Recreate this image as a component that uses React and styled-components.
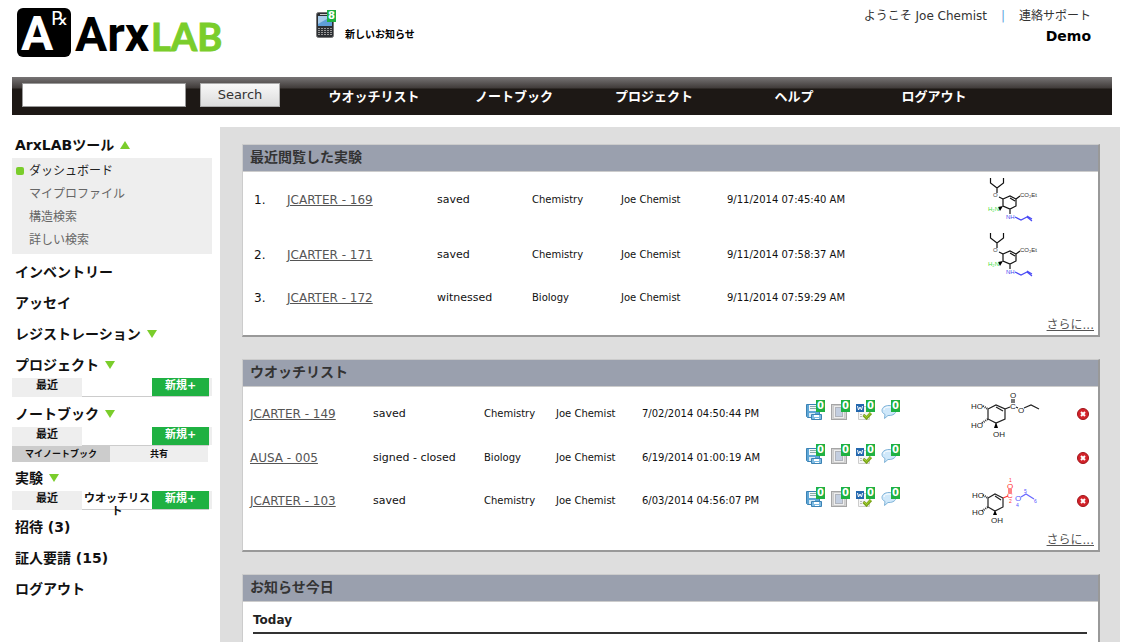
import React from "react";
import styled, { createGlobalStyle } from "styled-components";

const GREEN = "#1fb142";
const LIME = "#7acd2b";

const GlobalStyle = createGlobalStyle`
  *, *::before, *::after { box-sizing: border-box; }
  body {
    margin: 0;
    background: #fff;
    color: #111;
    font-family: "DejaVu Sans", "Noto Sans CJK JP", sans-serif;
    font-size: 12px;
    line-height: 16px;
  }
  ul { list-style: none; margin: 0; padding: 0; }
  a { color: inherit; text-decoration: none; }
  button, input { font-family: inherit; }
`;

const Page = styled.div`
  display: flex;
  flex-direction: column;
  min-height: 100vh;
  padding-right: 15px;
`;

/* ---------- top ---------- */

const Header = styled.header`
  display: flex;
  align-items: flex-start;
  height: 77px;
  padding: 0 29px 0 17px;
`;

const LogoLink = styled.a`
  display: block;
  width: 299px;
  svg { display: block; }
`;

const Notice = styled.a`
  display: flex;
  align-items: flex-end;
  gap: 9px;
  padding-top: 10px;
  font-size: 10px;
  font-weight: bold;
  color: #000;
`;

const IconWithCount = styled.span`
  position: relative;
  display: block;
  width: ${(p) => p.$width}px;
  height: ${(p) => p.$height}px;
  padding-top: ${(p) => p.$drop}px;
  svg { display: block; }
`;

const Count = styled.span`
  position: absolute;
  top: 0;
  right: 0;
  padding: 0 1px;
  background: ${GREEN};
  color: #fff;
  font-size: 10px;
  font-weight: bold;
  line-height: 12px;
`;

const Account = styled.div`
  margin-left: auto;
  padding-top: 7px;
  text-align: right;
  color: #333;
`;

const AccountLine = styled.div`
  display: flex;
  justify-content: flex-end;
  line-height: 18px;
`;

const Divider = styled.span`
  padding: 0 14px;
  color: #5aa5dc;
`;

const Group = styled.strong`
  display: block;
  font-size: 14px;
  line-height: 22px;
  color: #000;
`;

const NavBar = styled.div`
  display: flex;
  align-items: center;
  height: 38px;
  margin: 0 8px 12px 12px;
  padding: 0 10px;
  background: linear-gradient(#777475 0, #403b39 11px, #1d1815 12px, #1d1815 100%);
`;

const SearchForm = styled.form`
  display: flex;
  gap: 14px;
  padding-bottom: 2px;
`;

const SearchInput = styled.input`
  width: 164px;
  height: 24px;
  border: 1px solid #999;
  background: #fff;
  padding: 0 4px;
`;

const SearchButton = styled.button`
  width: 80px;
  height: 24px;
  padding: 0;
  border: 1px solid #aaa;
  background: linear-gradient(#f8f8f8, #dcdcdc);
  color: #333;
  font-size: 13px;
  line-height: 20px;
`;

const NavList = styled.ul`
  display: flex;
  margin-left: 24px;
  padding-top: 2px;
`;

const NavItem = styled.li`
  width: 140px;
  text-align: center;
  font-size: 13px;
  font-weight: bold;
  color: #fff;
`;

/* ---------- sidebar ---------- */

const Columns = styled.div`
  display: flex;
  flex: 1;
`;

const Sidebar = styled.nav`
  width: 220px;
  padding: 5px 8px 0 12px;
`;

const SideList = styled.ul`
  display: flex;
  flex-direction: column;
  gap: 5px;
`;

const SideHeading = styled.a`
  display: flex;
  align-items: center;
  gap: 6px;
  height: 26px;
  padding-left: 3px;
  font-size: 14px;
  font-weight: bold;
`;

const Triangle = styled.span`
  border: 5px solid transparent;
  ${(p) =>
    p.$open
      ? `border-top-width: 0; border-bottom: 8px solid ${LIME};`
      : `border-bottom-width: 0; border-top: 8px solid ${LIME};`}
`;

const SubMenu = styled.ul`
  padding: 1px 0 3px;
  background: #eee;
`;

const SubItem = styled.li`
  display: flex;
  align-items: center;
  gap: 5px;
  height: 23px;
  padding-left: 4px;
  color: ${(p) => (p.$active ? "#222" : "#666")};
  &::before {
    content: "";
    width: 8px;
    height: 8px;
    border-radius: 2px;
    background: ${(p) => (p.$active ? LIME : "transparent")};
  }
`;

const Tabs = styled.div`
  display: flex;
  height: 18px;
  background: #eee;
`;

const Tab = styled.a`
  width: ${(p) => (p.$kind === "new" ? 57 : 70)}px;
  height: 19px;
  padding-top: 1px;
  text-align: center;
  font-size: 11px;
  font-weight: bold;
  line-height: 13px;
  background: ${(p) => ({ recent: "#eee", middle: "#fff", new: GREEN })[p.$kind]};
  color: ${(p) => (p.$kind === "new" ? "#fff" : "#111")};
  border-bottom: 1px solid ${(p) => (p.$kind === "recent" ? "#eee" : "#ccc")};
`;

const SubTabs = styled.div`
  display: flex;
  height: 16px;
  margin: 1px 0 -2px;
  padding-right: 4px;
`;

const SubTab = styled.a`
  flex: 1;
  background: ${(p) => (p.$active ? "#ccc" : "#eee")};
  text-align: center;
  font-size: 9px;
  font-weight: bold;
`;

/* ---------- panels ---------- */

const Main = styled.main`
  display: flex;
  flex: 1;
  flex-direction: column;
  gap: 22px;
  padding: 17px 20px 0 22px;
  background: #dedede;
`;

const Panel = styled.section`
  flex: ${(p) => (p.$fill ? "1" : "none")};
  border: solid;
  border-width: 1px 2px ${(p) => (p.$fill ? 0 : 2)}px 1px;
  border-color: #ccc #999 #999 #ccc;
  background: #fff;
`;

const PanelTitle = styled.h2`
  height: 27px;
  margin: 0;
  padding-left: 7px;
  border-bottom: 1px solid #ccc;
  background: #9aa0ae;
  color: #333;
  font-size: 14px;
  line-height: 25px;
`;

const Table = styled.table`
  width: 100%;
  table-layout: fixed;
  border-collapse: collapse;
  td { padding: 0; }
`;

const Col = styled.col`
  width: ${(p) => (p.$w ? `${p.$w}px` : "auto")};
`;

const Row = styled.tr`
  height: ${(p) => p.$h}px;
`;

const NumberCell = styled.td`
  && { padding-left: 11px; }
`;

const NameCell = styled.td`
  && { padding-left: ${(p) => (p.$inset ? 7 : 0)}px; }
  a { color: #555; text-decoration: underline; }
`;

const StatusCell = styled.td`
  font-size: 11px;
`;

const SmallCell = styled.td`
  font-size: 10px;
`;

const DrawingCell = styled.td`
  svg { display: block; }
`;

const Actions = styled.div`
  display: flex;
  gap: 6px;
  padding-bottom: 8px;
`;

const IconButton = styled.button`
  display: block;
  padding: 0;
  border: 0;
  background: none;
  text-align: left;
  svg { display: block; }
`;

const PanelFooter = styled.div`
  height: 22px;
  padding-right: 4px;
  text-align: right;
  line-height: 24px;
  color: #555;
  a { text-decoration: underline; }
`;

const DayTitle = styled.h3`
  margin: 9px 11px 0 10px;
  padding-bottom: 3px;
  border-bottom: 2px solid #333;
  color: #222;
  font-size: 12px;
  line-height: 18px;
`;

/* ---------- drawings ---------- */

const Logo = () => (
  <svg width="210" height="68" viewBox="0 0 210 68" role="img" aria-label="ArxLAB">
    <rect x="0" y="8" width="54" height="49" rx="6" fill="#000" />
    <g fontFamily="Roboto, sans-serif" fontWeight="bold" fontSize="48">
      <text x="4" y="50" fill="#fff">A</text>
      <text x="58" y="51" fill="#000">Arx</text>
    </g>
    <text x="134" y="51" fontSize="38" fontFamily="Lato, sans-serif" fontWeight="bold" fill={LIME} stroke={LIME} strokeWidth="1">LAB</text>
    <text x="34" y="25" fontSize="19" fontFamily="DejaVu Serif, DejaVu Sans, serif" fill="#fff">℞</text>
  </svg>
);

const Phone = () => (
  <svg width="18" height="26" viewBox="0 0 18 26">
    <rect x="0.5" y="0.5" width="17" height="25" rx="2" fill="#2c2f33" stroke="#777" />
    <rect x="4" y="2" width="8" height="1" fill="#ccc" />
    <rect x="2" y="4" width="14" height="10" fill="#5f9fd8" />
    <path d="M2 4h14L2 12z" fill="#a7cbea" />
    <path d="M2 16.500h14M2 18.500h14M2 20.500h14M2 22.500h14" stroke="#999" strokeDasharray="2 1" />
  </svg>
);

const Disk = () => (
  <svg width="16" height="16" viewBox="0 0 16 16">
    <path d="M.5.500h12l1 1v12h-12l-1-1z" fill="#5ea6d6" stroke="#3b82b4" />
    <path d="M3 1h9v6H3z" fill="#f4f8fb" />
    <path d="M4 2.500h6M4 4.500h7" stroke="#8aa" />
    <path d="M3 9h6v4H3z" fill="#d8eaf6" />
    <path d="M5.500 10.500h10v5h-10z" fill="#7fbbe2" stroke="#3b82b4" />
    <path d="M8 11h5v2H8zM9 14h4v1H9z" fill="#fff" />
  </svg>
);

const Frame = () => (
  <svg width="16" height="16" viewBox="0 0 16 16">
    <rect x=".5" y=".5" width="15" height="15" fill="#d4d4d4" stroke="#a5a5a5" />
    <rect x="2.500" y="1.500" width="11" height="13" fill="#eee" stroke="#ccc" />
    <rect x="4.500" y="3.500" width="7" height="9" fill="#c3cee0" stroke="#b0b4bc" />
  </svg>
);

const WordCheck = () => (
  <svg width="16" height="16" viewBox="0 0 16 16">
    <path d="M2.500 2.500h11v13h-11z" fill="#f6f6f6" stroke="#ccc" />
    <path d="M4 10.500h5M4 12.500h4" stroke="#bbb" strokeDasharray="2 1" />
    <rect x="0" y="0" width="8" height="8" fill="#2468ae" />
    <path d="M1.500 2l1 4L4 3l1.500 3 1-4" fill="none" stroke="#fff" />
    <path d="M7.500 11l3 3L15 9" fill="none" stroke="#7ba51c" strokeWidth="3" />
    <path d="M8 11l2.500 2.500L14.500 9" fill="none" stroke="#a6d32d" />
  </svg>
);

const Bubble = () => (
  <svg width="16" height="16" viewBox="0 0 16 16">
    <path
      d="M8 1.500c4 0 7 2 7 5s-3 5-7 5l-1 0-3.500 3 .5-4C2 9.500 1 8 1 6.500c0-3 3-5 7-5z"
      fill="#cfe8fa"
      stroke="#7fb3d8"
    />
    <path d="M3 6c0-2 2-3 5-3s4 1 5 2" fill="none" stroke="#fff" />
  </svg>
);

const Remove = () => (
  <svg width="12" height="12" viewBox="0 0 12 12">
    <circle cx="6" cy="6" r="5.500" fill="#d3232a" stroke="#a01318" />
    <path d="M4 4l4 4M8 4l-4 4" stroke="#fff" strokeWidth="2" />
  </svg>
);

const Oseltamivir = () => (
  <svg width="60" height="50" viewBox="0 0 60 50" fontFamily="Liberation Sans, sans-serif" fontSize="6">
    <g fill="none" stroke="#111" strokeWidth="1.200">
      <path d="M5.500 3v5l6.500 5 6.500-5V3M12 13v5M14 22l4 2" />
      <path d="M18 24l7-3 6 3v7l-6 3-7-3zM25 23l5 3M31 24l4-3M25 34v5" />
    </g>
    <path d="M18 31l-5 1 2 4z" fill="#000" />
    <text x="8" y="22" fill="#444">O</text>
    <text x="35" y="22" fill="#333" fontSize="6">CO₂Et</text>
    <text x="3" y="36" fill="#3be03b">H₂N</text>
    <text x="21" y="44" fill="#4a4af0">NH</text>
    <path d="M30 42l6 3 6-3 5 4M42 41l5 3" fill="none" stroke="#4a4af5" strokeWidth="1.200" />
  </svg>
);

const Shikimate = () => (
  <svg width="74" height="50" viewBox="0 0 74 50" fontFamily="Liberation Sans, sans-serif" fontSize="8" fill="#222">
    <g fill="none" stroke="#222" strokeWidth="1.200">
      <path d="M18 20l8-4 9 4v10l-9 4-8-4zM26 18l7 4M35 20l5-2M46 18l2 1M54 19l7-3 8 4M42 10v4M44 10v4" />
      <path d="M13 17l5 3M12 34l6-4" strokeDasharray="1 1" strokeWidth="2" />
    </g>
    <path d="M26 33l2 6h-4z" fill="#000" />
    <text x="1" y="20">HO</text>
    <text x="1" y="39">HO</text>
    <text x="23" y="48">OH</text>
    <text x="40" y="9">O</text>
    <text x="40" y="20">C</text>
    <text x="48" y="24">O</text>
  </svg>
);

const NumberedShikimate = () => (
  <svg width="74" height="50" viewBox="0 0 74 50" fontFamily="Liberation Sans, sans-serif" fontSize="8" fill="#222">
    <g fill="none" stroke="#222" strokeWidth="1.200">
      <path d="M18 22l7-4 8 4v9l-8 4-7-4zM25 20l6 4" />
      <path d="M13 19l5 3M12 35l6-4" strokeDasharray="1 1" strokeWidth="2" />
    </g>
    <path d="M25 34l2 5h-4z" fill="#000" />
    <path d="M33 22l5-2M39 13v4M41 13v4" stroke="#f33" strokeWidth="1.200" />
    <path d="M51 21l5-3 8 5" fill="none" stroke="#66f" strokeWidth="1.200" />
    <text x="2" y="22">HO</text>
    <text x="2" y="39">HO</text>
    <text x="21" y="47">OH</text>
    <g fill="#f33">
      <text x="37" y="13">O</text>
      <text x="37" y="22">C</text>
      <text x="39" y="6" fontSize="5">1</text>
      <text x="39" y="27" fontSize="5">2</text>
    </g>
    <g fill="#55f">
      <text x="45" y="25">O</text>
      <text x="46" y="31" fontSize="5">4</text>
      <text x="54" y="17" fontSize="5">5</text>
      <text x="64" y="27" fontSize="5">6</text>
    </g>
  </svg>
);

/* ---------- data ---------- */

const navItems = ["ウオッチリスト", "ノートブック", "プロジェクト", "ヘルプ", "ログアウト"];
const tools = ["ダッシュボード", "マイプロファイル", "構造検索", "詳しい検索"];

const recent = [
  { name: "JCARTER - 169", status: "saved", type: "Chemistry", date: "9/11/2014 07:45:40 AM", Drawing: Oseltamivir, h: 55 },
  { name: "JCARTER - 171", status: "saved", type: "Chemistry", date: "9/11/2014 07:58:37 AM", Drawing: Oseltamivir, h: 56 },
  { name: "JCARTER - 172", status: "witnessed", type: "Biology", date: "9/11/2014 07:59:29 AM", h: 30 },
];

const watched = [
  { name: "JCARTER - 149", status: "saved", type: "Chemistry", date: "7/02/2014 04:50:44 PM", Drawing: Shikimate, h: 54 },
  { name: "AUSA - 005", status: "signed - closed", type: "Biology", date: "6/19/2014 01:00:19 AM", h: 33 },
  { name: "JCARTER - 103", status: "saved", type: "Chemistry", date: "6/03/2014 04:56:07 PM", Drawing: NumberedShikimate, h: 54 },
];

const actions = [
  ["保存", Disk],
  ["添付", Frame],
  ["文書", WordCheck],
  ["コメント", Bubble],
];

const Section = ({ title, marker, children }) => (
  <li>
    <SideHeading href="#">
      {title}
      {marker && <Triangle $open={marker === "up"} />}
    </SideHeading>
    {children}
  </li>
);

const TabRow = ({ middle }) => (
  <Tabs>
    <Tab href="#" $kind="recent">最近</Tab>
    {middle ? <Tab href="#" $kind="middle">{middle}</Tab> : <Tab as="span" $kind="middle" />}
    <Tab href="#" $kind="new">新規+</Tab>
  </Tabs>
);

const More = () => (
  <PanelFooter>
    <a href="#">さらに...</a>
  </PanelFooter>
);

export default function App() {
  return (
    <Page>
      <GlobalStyle />
      <Header>
        <LogoLink href="#"><Logo /></LogoLink>
        <Notice href="#">
          <IconWithCount $width={20} $height={33} $drop={2}>
            <Phone />
            <Count>8</Count>
          </IconWithCount>
          新しいお知らせ
        </Notice>
        <Account>
          <AccountLine>
            <span>ようこそ Joe Chemist</span>
            <Divider>|</Divider>
            <a href="#">連絡サポート</a>
          </AccountLine>
          <Group>Demo</Group>
        </Account>
      </Header>

      <NavBar>
        <SearchForm onSubmit={(e) => e.preventDefault()}>
          <SearchInput type="text" aria-label="Search" />
          <SearchButton type="submit">Search</SearchButton>
        </SearchForm>
        <NavList>
          {navItems.map((item) => (
            <NavItem key={item}><a href="#">{item}</a></NavItem>
          ))}
        </NavList>
      </NavBar>

      <Columns>
        <Sidebar>
          <SideList>
            <Section title="ArxLABツール" marker="up">
              <SubMenu>
                {tools.map((tool, i) => (
                  <SubItem key={tool} $active={i === 0}><a href="#">{tool}</a></SubItem>
                ))}
              </SubMenu>
            </Section>
            <Section title="インベントリー" />
            <Section title="アッセイ" />
            <Section title="レジストレーション" marker="down" />
            <Section title="プロジェクト" marker="down">
              <TabRow />
            </Section>
            <Section title="ノートブック" marker="down">
              <TabRow />
              <SubTabs>
                <SubTab href="#" $active>マイノートブック</SubTab>
                <SubTab href="#">共有</SubTab>
              </SubTabs>
            </Section>
            <Section title="実験" marker="down">
              <TabRow middle="ウオッチリスト" />
            </Section>
            <Section title="招待 (3)" />
            <Section title="証人要請 (15)" />
            <Section title="ログアウト" />
          </SideList>
        </Sidebar>

        <Main>
          <Panel>
            <PanelTitle>最近閲覧した実験</PanelTitle>
            <Table>
              <colgroup>
                {[44, 150, 95, 89, 106, 0, 113].map((w, i) => <Col key={i} $w={w} />)}
              </colgroup>
              <tbody>
                {recent.map(({ name, status, type, date, Drawing, h }, i) => (
                  <Row key={name} $h={h}>
                    <NumberCell>{i + 1}.</NumberCell>
                    <NameCell><a href="#">{name}</a></NameCell>
                    <StatusCell>{status}</StatusCell>
                    <SmallCell>{type}</SmallCell>
                    <SmallCell>Joe Chemist</SmallCell>
                    <SmallCell>{date}</SmallCell>
                    <DrawingCell>{Drawing && <Drawing />}</DrawingCell>
                  </Row>
                ))}
              </tbody>
            </Table>
            <More />
          </Panel>

          <Panel>
            <PanelTitle>ウオッチリスト</PanelTitle>
            <Table>
              <colgroup>
                {[130, 111, 72, 86, 164, 0, 107, 21].map((w, i) => <Col key={i} $w={w} />)}
              </colgroup>
              <tbody>
                {watched.map(({ name, status, type, date, Drawing, h }) => (
                  <Row key={name} $h={h}>
                    <NameCell $inset><a href="#">{name}</a></NameCell>
                    <StatusCell>{status}</StatusCell>
                    <SmallCell>{type}</SmallCell>
                    <SmallCell>Joe Chemist</SmallCell>
                    <SmallCell>{date}</SmallCell>
                    <td>
                      <Actions>
                        {actions.map(([label, Icon]) => (
                          <IconButton key={label} type="button" aria-label={label}>
                            <IconWithCount $width={19} $height={20} $drop={4}>
                              <Icon />
                              <Count>0</Count>
                            </IconWithCount>
                          </IconButton>
                        ))}
                      </Actions>
                    </td>
                    <DrawingCell>{Drawing && <Drawing />}</DrawingCell>
                    <td>
                      <IconButton type="button" aria-label="削除"><Remove /></IconButton>
                    </td>
                  </Row>
                ))}
              </tbody>
            </Table>
            <More />
          </Panel>

          <Panel $fill>
            <PanelTitle>お知らせ今日</PanelTitle>
            <DayTitle>Today</DayTitle>
          </Panel>
        </Main>
      </Columns>
    </Page>
  );
}
